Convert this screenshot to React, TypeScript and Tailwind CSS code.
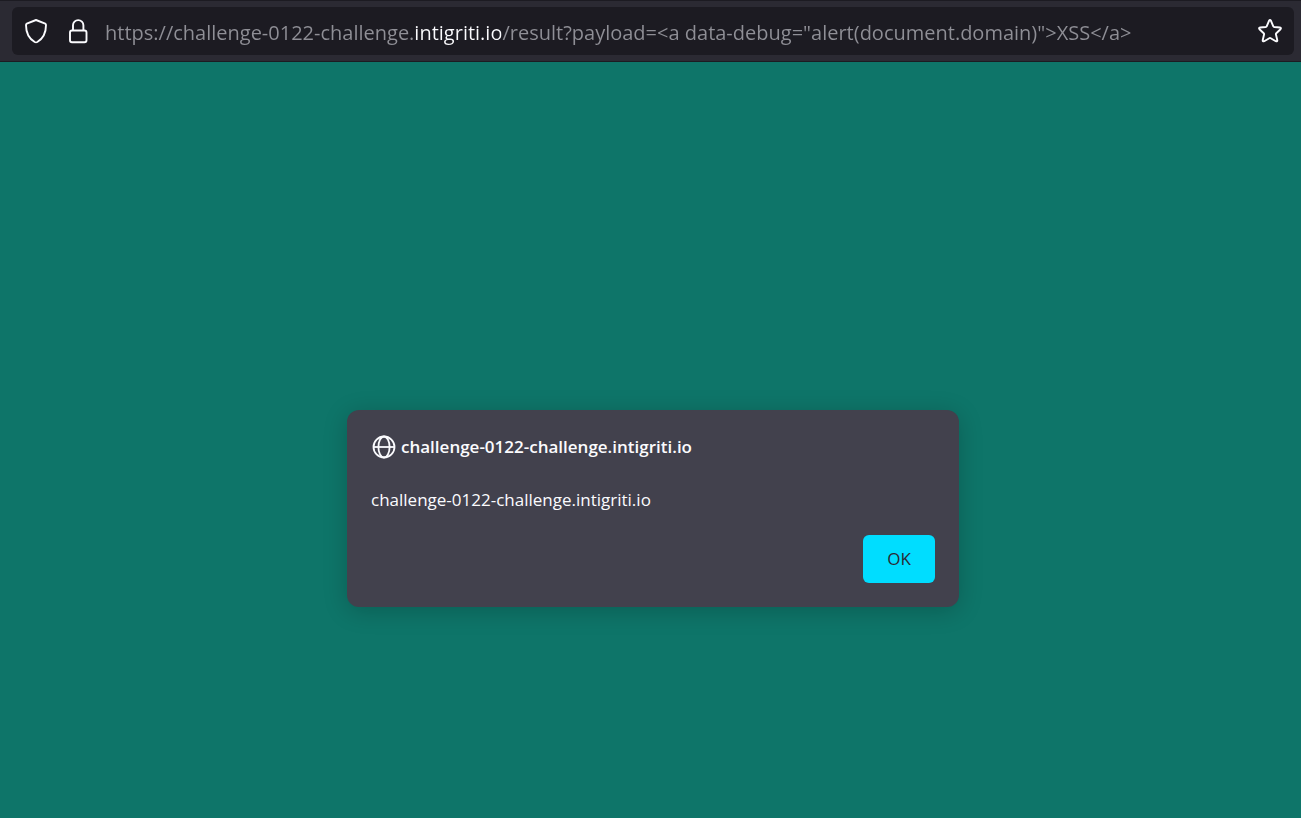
import { useState } from 'react'

const host = 'challenge-0122-challenge.intigriti.io'
const startUrl = `https://${host}/result?payload=<a data-debug="alert(document.domain)">XSS</a>`

function ShieldIcon() {
  return (
    <svg width="24" height="26" viewBox="0 0 24 26" fill="none" stroke="currentColor" strokeWidth="1.9" strokeLinejoin="round" aria-hidden="true">
      <path d="M12 2 L21.2 5.6 Q22 6 22 7 C22 14.5 20 20 13.3 24 Q12 24.7 10.7 24 C4 20 2 14.5 2 7 Q2 6 2.8 5.6 Z" />
    </svg>
  )
}

function LockIcon() {
  return (
    <svg width="20" height="26" viewBox="0 0 20 26" fill="none" stroke="currentColor" strokeWidth="1.9" aria-hidden="true">
      <rect x="2" y="12.5" width="16.5" height="11.8" rx="2" />
      <path d="M5 12.5 V7.3 a5.2 5.2 0 0 1 10.4 0 V12.5" />
    </svg>
  )
}

function StarIcon() {
  return (
    <svg width="24" height="24" viewBox="0 0 24 24" fill="none" stroke="currentColor" strokeWidth="1.9" strokeLinejoin="round" aria-hidden="true">
      <path d="M11 1.8 Q12 .2 13 1.8 L15.3 7.3 Q15.6 7.9 16.3 8 L21.9 8.5 Q23.6 8.8 22.5 10.2 L18.3 14.2 Q17.8 14.7 17.9 15.3 L19.3 21.2 Q19.4 22.9 17.8 22.2 L12.7 19.2 Q12 18.8 11.3 19.2 L6.2 22.2 Q4.6 22.9 4.7 21.2 L6.1 15.3 Q6.2 14.7 5.7 14.2 L1.5 10.2 Q.4 8.8 2.1 8.5 L7.7 8 Q8.4 7.9 8.7 7.3 Z" />
    </svg>
  )
}

function GlobeIcon() {
  return (
    <svg width="24" height="24" viewBox="0 0 24 24" fill="none" stroke="currentColor" strokeWidth="1.8" aria-hidden="true">
      <circle cx="12" cy="12" r="10.5" />
      <ellipse cx="12" cy="12" rx="5.6" ry="10.5" />
      <path d="M1.5 12 H22.5" />
    </svg>
  )
}

function AddressBar() {
  const [url, setUrl] = useState(startUrl)

  return (
    <header className="border-y border-[#1c1b22] bg-[#2b2a33] py-1.5 pr-[7px] pl-3">
      <div className="flex h-12 items-center rounded-md bg-[#1c1b22] px-3 text-[#fbfbfe]">
        <button type="button" aria-label="Tracking protection" className="mr-5 shrink-0">
          <ShieldIcon />
        </button>
        <button type="button" aria-label="Site information" className="mr-4 shrink-0">
          <LockIcon />
        </button>
        {/* the registered domain is the bright band of the gradient */}
        <input
          type="text"
          aria-label="Address"
          spellCheck={false}
          value={url}
          onChange={(e) => setUrl(e.target.value)}
          className="h-10 min-w-0 flex-1 bg-[linear-gradient(to_right,#8f8f96_309px,#fbfbfe_309px,#fbfbfe_397px,#8f8f96_397px)] bg-clip-text pt-0.5 pl-px text-[20px] text-transparent caret-white outline-none"
        />
        <button type="button" aria-label="Bookmark this page" className="ml-4 shrink-0">
          <StarIcon />
        </button>
      </div>
    </header>
  )
}

function AlertDialog({ onClose }: { onClose: () => void }) {
  return (
    <div
      role="alertdialog"
      aria-labelledby="alert-title"
      aria-describedby="alert-text"
      className="w-full max-w-[612px] rounded-xl bg-[#42414d] p-6 text-[#fbfbfe] shadow-[0_4px_24px_rgba(0,0,0,0.2)]"
    >
      <div className="flex h-6 items-center gap-[5px] pt-0.5 pl-px">
        <GlobeIcon />
        <h1 id="alert-title" className="text-[17px] leading-6 font-semibold">
          {host}
        </h1>
      </div>
      <p id="alert-text" className="mt-7 text-[17px] leading-7">
        {host}
      </p>
      <div className="mt-[21px] flex justify-end">
        <button
          type="button"
          onClick={onClose}
          className="h-12 w-[72px] rounded-md bg-[#00ddff] text-[17px] font-medium text-[#2b2a33]"
        >
          OK
        </button>
      </div>
    </div>
  )
}

export default function App() {
  const [open, setOpen] = useState(true)

  return (
    <div className="flex min-h-screen flex-col bg-[#0e7569] font-['Open_Sans','Noto_Sans',sans-serif]">
      <AddressBar />
      <main className="flex flex-1 items-start justify-center pt-[348px] pl-[5px]">
        {open && <AlertDialog onClose={() => setOpen(false)} />}
      </main>
    </div>
  )
}
